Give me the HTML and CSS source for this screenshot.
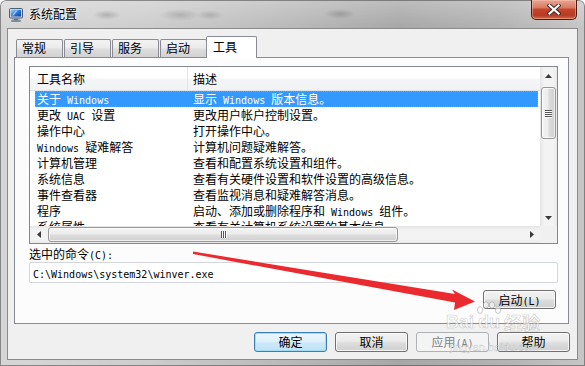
FILE: index.html
```html
<!DOCTYPE html>
<html lang="zh-CN">
<head>
<meta charset="utf-8">
<title>系统配置</title>
<link rel="stylesheet" href="styles.css">
</head>
<body>
<div class="window">
  <div class="titlebar">
    <svg class="appicon" width="14" height="14" viewBox="0 0 14 14">
      <defs>
        <linearGradient id="scr" x1="0" y1="0" x2="1" y2="1">
          <stop offset="0" stop-color="#9fd0ff"/>
          <stop offset="0.45" stop-color="#2f7fe0"/>
          <stop offset="1" stop-color="#0d3f9c"/>
        </linearGradient>
      </defs>
      <rect x="0.5" y="0.5" width="13" height="9.5" rx="1" fill="#c9d2dc" stroke="#4d5d74"/>
      <rect x="2" y="2" width="10" height="6.5" fill="url(#scr)"/>
      <path d="M3 7.5 L7 2.5 L8.5 2.5 L4.5 7.5 Z" fill="#ffffff" opacity="0.6"/>
      <rect x="5" y="10.5" width="4" height="1.5" fill="#6b7a8c"/>
      <rect x="2.5" y="12" width="9" height="1.8" rx="0.8" fill="#8d99a8" stroke="#4d5d74" stroke-width="0.5"/>
    </svg>
    <span class="title">系统配置</span>
    <div class="close">
      <svg width="14" height="11" viewBox="0 0 14 11">
        <path d="M2.5 1.5 L11.5 9.5 M11.5 1.5 L2.5 9.5" stroke="#3a2a2a" stroke-width="4" stroke-linecap="square"/>
        <path d="M2.5 1.5 L11.5 9.5 M11.5 1.5 L2.5 9.5" stroke="#ffffff" stroke-width="2.2" stroke-linecap="square"/>
      </svg>
    </div>
  </div>

  <div class="client">
    <div class="tabs">
      <div class="tab">常规</div>
      <div class="tab">引导</div>
      <div class="tab">服务</div>
      <div class="tab">启动</div>
      <div class="tab active">工具</div>
    </div>

    <div class="panel">
      <div class="listbox">
        <div class="listview">
          <div class="hdr">
            <div class="hc1">工具名称</div>
            <div class="hc2">描述</div>
          </div>
          <div class="row sel"><div class="c1">关于<span class="en"> Windows</span></div><div class="c2">显示<span class="en"> Windows </span>版本信息。</div></div>
          <div class="row"><div class="c1">更改<span class="en"> UAC </span>设置</div><div class="c2">更改用户帐户控制设置。</div></div>
          <div class="row"><div class="c1">操作中心</div><div class="c2">打开操作中心。</div></div>
          <div class="row"><div class="c1"><span class="en">Windows </span>疑难解答</div><div class="c2">计算机问题疑难解答。</div></div>
          <div class="row"><div class="c1">计算机管理</div><div class="c2">查看和配置系统设置和组件。</div></div>
          <div class="row"><div class="c1">系统信息</div><div class="c2">查看有关硬件设置和软件设置的高级信息。</div></div>
          <div class="row"><div class="c1">事件查看器</div><div class="c2">查看监视消息和疑难解答消息。</div></div>
          <div class="row"><div class="c1">程序</div><div class="c2">启动、添加或删除程序和<span class="en"> Windows </span>组件。</div></div>
          <div class="row"><div class="c1">系统属性</div><div class="c2">查看有关计算机系统设置的基本信息。</div></div>
        </div>
        <div class="vscroll">
          <div class="sbtn"><svg width="7" height="4" viewBox="0 0 7 4"><path d="M0 4 L3.5 0 L7 4 Z" fill="#3a3a3a"/></svg></div>
          <div class="vthumb"><span class="grip"></span><span class="grip"></span><span class="grip"></span><span class="grip"></span></div>
          <div class="fill"></div>
          <div class="sbtn"><svg width="7" height="4" viewBox="0 0 7 4"><path d="M0 0 L7 0 L3.5 4 Z" fill="#3a3a3a"/></svg></div>
        </div>
        <div class="hscroll">
          <div class="sbtn"><svg width="4" height="7" viewBox="0 0 4 7"><path d="M4 0 L4 7 L0 3.5 Z" fill="#3a3a3a"/></svg></div>
          <div class="hthumb"><span class="vgrip"></span><span class="vgrip"></span><span class="vgrip"></span></div>
          <div class="fill"></div>
          <div class="sbtn"><svg width="4" height="7" viewBox="0 0 4 7"><path d="M0 0 L4 3.5 L0 7 Z" fill="#3a3a3a"/></svg></div>
        </div>
        <div class="corner"></div>
      </div>

      <div class="cmdlabel">选中的命令<span class="en">(C):</span></div>
      <div class="cmd"><span class="en">C:\Windows\system32\winver.exe</span></div>
      <div class="launchrow"><div class="btn">启动<span class="en">(L)</span></div></div>
    </div>

    <div class="buttons">
      <div class="btn default">确定</div>
      <div class="btn">取消</div>
      <div class="btn disabled">应用<span class="en">(A)</span></div>
      <div class="btn">帮助</div>
    </div>
  </div>

  <svg class="arrow" width="585" height="366" viewBox="0 0 585 366">
    <polygon points="193,251.5 455,294 452,289.5 475,301.5 454,310 455,302.5 193,254" fill="#ea2a2e"/>
  </svg>

  <div class="watermark">
    <div class="wm-top">
      <span class="wm-bai">Bai</span>
      <span class="wm-du">
        <svg class="paw" width="26" height="16" viewBox="0 0 26 16">
          <g fill="rgba(255,255,255,0.55)" stroke="rgba(140,140,140,0.45)" stroke-width="1">
            <ellipse cx="4" cy="9" rx="2.6" ry="3.4"/>
            <ellipse cx="10" cy="4" rx="2.6" ry="3.2"/>
            <ellipse cx="16" cy="4" rx="2.6" ry="3.2"/>
            <ellipse cx="22" cy="9" rx="2.6" ry="3.4"/>
          </g>
        </svg>du</span>
      <span class="wm-cn">经验</span>
    </div>
    <div class="wm-url">jingyan.baidu.com</div>
  </div>
</div>
</body>
</html>
```

FILE: styles.css
```css
* { box-sizing: border-box; }
html, body { margin: 0; padding: 0; }
body {
  width: 585px;
  height: 366px;
  overflow: hidden;
  background: #ffffff;
  font-family: "Noto Sans CJK SC", "Noto Sans", sans-serif;
  font-size: 12px;
  color: #000;
}

.en {
  font-family: "DejaVu Sans Mono", "Liberation Mono", monospace;
  font-size: 10px;
  white-space: pre;
}

.window {
  position: relative;
  width: 585px;
  height: 366px;
  display: flex;
  flex-direction: column;
  border-radius: 6px 6px 0 0;
  background:
    linear-gradient(rgba(255,255,255,0.25), rgba(255,255,255,0) 28px),
    linear-gradient(to right, #d6d6d6 0%, #cdcdcd 25%, #bababa 48%, #a7a7a7 68%, #b2b2b2 85%, #c6c6c6 100%);
  box-shadow: inset 0 0 0 1px rgba(70,70,70,0.55);
}

/* Title bar */
.titlebar {
  height: 28px;
  flex: none;
  display: flex;
  align-items: flex-start;
  padding-left: 9px;
  background:
    radial-gradient(ellipse 14px 5px at 107px 15px, rgba(110,110,110,0.35), rgba(110,110,110,0)),
    radial-gradient(ellipse 20px 6px at 180px 15px, rgba(110,110,110,0.3), rgba(110,110,110,0)),
    radial-gradient(ellipse 14px 5px at 210px 15px, rgba(110,110,110,0.3), rgba(110,110,110,0)),
    radial-gradient(ellipse 16px 5px at 340px 14px, rgba(100,100,100,0.35), rgba(100,100,100,0));
}
.appicon { margin-top: 8px; flex: none; }
.title {
  margin-top: 6px;
  margin-left: 6px;
  line-height: 16px;
  font-size: 12px;
  color: #000;
  text-shadow: 0 0 5px rgba(255,255,255,0.9), 0 0 2px rgba(255,255,255,0.9);
}
.close {
  margin-left: auto;
  margin-right: 8px;
  width: 46px;
  height: 20px;
  border: 1px solid #4b1c15;
  border-top: none;
  border-radius: 0 0 5px 5px;
  background: linear-gradient(#e9a795 0%, #d97a62 40%, #c4452a 50%, #b83a22 80%, #d4694a 100%);
  box-shadow: inset 0 0 0 1px rgba(255,200,180,0.45);
  display: flex;
  align-items: center;
  justify-content: center;
}

/* Client area */
.client {
  margin-left: 7px;
  width: 571px;
  height: 332px;
  flex: none;
  background: #f0f0f0;
  border: 1px solid #8b8b8b;
  padding-top: 7px;
  display: flex;
  flex-direction: column;
}

.tabs {
  display: flex;
  align-items: flex-end;
  height: 21px;
  margin-left: 8px;
  position: relative;
  z-index: 2;
  flex: none;
}
.tab {
  width: 47px;
  height: 18px;
  margin-right: 1px;
  border: 1px solid #898c95;
  border-bottom: none;
  border-radius: 2px 2px 0 0;
  background: linear-gradient(#f3f3f3 0%, #ebebeb 45%, #dddddd 55%, #d2d2d2 100%);
  padding-left: 5px;
  line-height: 16px;
}
.tab.active {
  width: 51px;
  height: 22px;
  margin-left: -2px;
  margin-right: 0;
  margin-bottom: -1px;
  background: #ffffff;
  padding-left: 6px;
  line-height: 19px;
}

.panel {
  margin-left: 6px;
  width: 555px;
  height: 267px;
  flex: none;
  border: 1px solid #898c95;
  background: #fcfcfc;
  padding: 8px 0 0 14px;
  display: flex;
  flex-direction: column;
}

/* List */
.listbox {
  width: 529px;
  height: 178px;
  flex: none;
  border: 1px solid #828790;
  background: #ffffff;
  display: grid;
  grid-template-columns: 1fr 17px;
  grid-template-rows: 1fr 17px;
}
.listview { overflow: hidden; }
.hdr {
  height: 24px;
  display: flex;
  border-bottom: 1px solid #e0e2e6;
  background: linear-gradient(#ffffff 0%, #ffffff 45%, #f4f5f7 55%, #f1f2f4 100%);
  line-height: 23px;
}
.hc1 {
  width: 158px;
  padding-left: 7px;
  border-right: 1px solid #e3e5e8;
}
.hc2 { padding-left: 5px; }

.row {
  margin-left: 5px;
  width: 503px;
  height: 16px;
  display: grid;
  grid-template-columns: 158px 1fr;
  line-height: 16px;
  white-space: nowrap;
}
.row .c1 { padding-left: 2px; }
.row.sel {
  background: #3399ff;
  color: #ffffff;
  outline: 1px dotted #d28a3c;
  outline-offset: -1px;
}

.vscroll {
  display: flex;
  flex-direction: column;
  background: linear-gradient(to right, #e5e5e5 0%, #f3f3f3 25%, #f3f3f3 80%, #e8e8e8 100%);
}
.hscroll {
  display: flex;
  background: linear-gradient(#e5e5e5 0%, #f3f3f3 25%, #f3f3f3 80%, #e8e8e8 100%);
}
.corner { background: #f0f0f0; }
.sbtn {
  width: 17px;
  height: 17px;
  flex: none;
  display: flex;
  align-items: center;
  justify-content: center;
}
.vscroll .sbtn { width: auto; }
.hscroll .sbtn { height: auto; }
.fill { flex: 1; }

.vthumb {
  margin: 3px 1px 0 1px;
  height: 52px;
  flex: none;
  border: 1px solid #979797;
  border-radius: 3px;
  background: linear-gradient(to right, #f4f4f4 0%, #ececec 45%, #dcdcdc 55%, #d0d0d0 100%);
  box-shadow: inset 0 0 0 1px rgba(255,255,255,0.7);
  display: flex;
  flex-direction: column;
  align-items: center;
  justify-content: center;
  gap: 1px;
}
.grip {
  width: 7px;
  height: 1px;
  background: #555;
  box-shadow: 0 1px 0 #fff;
}
.hthumb {
  margin: 1px 0 1px 1px;
  width: 350px;
  flex: none;
  border: 1px solid #979797;
  border-radius: 3px;
  background: linear-gradient(#f4f4f4 0%, #ececec 45%, #dcdcdc 55%, #d0d0d0 100%);
  box-shadow: inset 0 0 0 1px rgba(255,255,255,0.7);
  display: flex;
  align-items: center;
  justify-content: center;
  gap: 1px;
}
.vgrip {
  width: 1px;
  height: 7px;
  background: #555;
  box-shadow: 1px 0 0 #fff;
}

.cmdlabel {
  margin-top: 2px;
  height: 16px;
  line-height: 16px;
  flex: none;
}
.cmd {
  width: 529px;
  height: 21px;
  flex: none;
  border: 1px solid #d3d7dc;
  border-radius: 2px;
  background: #ffffff;
  padding-left: 3px;
  line-height: 19px;
}

.launchrow {
  width: 529px;
  margin-top: 7px;
  display: flex;
  justify-content: flex-end;
  padding-right: 2px;
  flex: none;
}
.launchrow .btn { height: 19px; line-height: 17px; }

.btn {
  width: 73px;
  height: 20px;
  flex: none;
  border: 1px solid #707070;
  border-radius: 3px;
  background: linear-gradient(#f2f2f2 0%, #ebebeb 45%, #dddddd 55%, #cfcfcf 100%);
  box-shadow: inset 0 0 0 1px rgba(252,252,252,0.8);
  text-align: center;
  line-height: 18px;
  white-space: nowrap;
}
.btn.default {
  border-color: #3c7fb1;
  box-shadow: inset 0 0 0 1px #9fdcf8;
  background: linear-gradient(#eaf6fd 0%, #e0f1fb 45%, #cde9f8 55%, #bfe2f6 100%);
}
.btn.disabled {
  border-color: #adb2b5;
  background: #f4f4f4;
  box-shadow: none;
  color: #838383;
}

.buttons {
  margin-top: 8px;
  display: flex;
  justify-content: flex-end;
  gap: 8px;
  padding-right: 7px;
}

/* Annotation overlays */
.arrow {
  position: absolute;
  left: 0;
  top: 0;
  pointer-events: none;
}
.watermark {
  position: absolute;
  left: 446px;
  top: 304px;
  pointer-events: none;
  color: rgba(255,255,255,0.55);
  -webkit-text-stroke: 0.6px rgba(140,140,140,0.45);
}
.wm-top {
  display: flex;
  align-items: flex-end;
  height: 28px;
  font-family: "Liberation Sans", sans-serif;
  font-weight: bold;
  font-size: 18px;
  line-height: 20px;
}
.wm-du {
  position: relative;
  margin-left: 4px;
}
.paw {
  position: absolute;
  left: -2px;
  top: -11px;
}
.wm-cn {
  margin-left: 4px;
  font-family: "Noto Sans CJK SC", sans-serif;
  font-size: 18px;
}
.wm-url {
  margin-top: 9px;
  margin-left: 4px;
  font-family: "Liberation Sans", sans-serif;
  font-size: 11px;
  line-height: 12px;
  -webkit-text-stroke: 0.4px rgba(140,140,140,0.45);
}
```
